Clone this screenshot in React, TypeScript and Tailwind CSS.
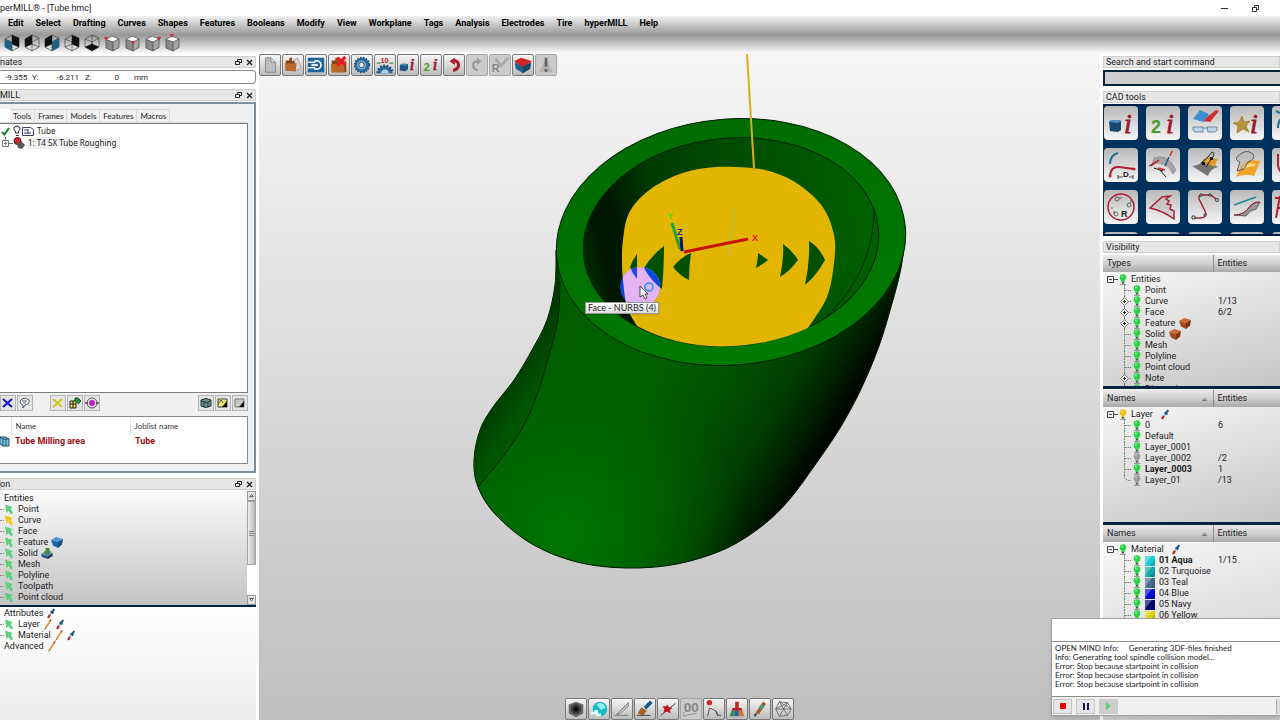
import React from 'react';
import clsx from 'clsx';

const MENU = [
	'Edit', 'Select', 'Drafting', 'Curves', 'Shapes', 'Features', 'Booleans', 'Modify',
	'View', 'Workplane', 'Tags', 'Analysis', 'Electrodes', 'Tire', 'hyperMILL', 'Help',
];

type RowData = {
	name: string;
	count?: string;
	bulb?: string;
	expand?: boolean;
	bold?: boolean;
	extra?: React.ReactNode;
	swatch?: string;
};

/* ---------- small icons ---------- */

const Bulb = ({ color = '#2fd04a' }: { color?: string }) => (
	<svg width="10" height="11" viewBox="0 0 10 11" className="shrink-0">
		<circle cx="5" cy="3.6" r="3.3" fill={color} />
		<circle cx="4" cy="2.6" r="1" fill="#fff" opacity=".5" />
		<path d="M3.4 6h3.2v2H3.4z" fill={color} />
		<path d="M3.8 8h2.4v1.6H3.8z" fill="#4a5a4a" />
		<path d="M2 10.4h6" stroke="#555" strokeWidth=".6" />
	</svg>
);

const Pick = ({ color = '#5fd07a' }: { color?: string }) => (
	<svg width="10" height="11" viewBox="0 0 10 11" className="shrink-0">
		<path d="M1 .5 8.500 3 6.800 5 9 9 7 10.500 4.600 7 2.600 9z" fill={color} />
	</svg>
);

const Dropper = () => (
	<svg width="10" height="11" viewBox="0 0 10 11" className="shrink-0">
		<path d="M2 10 4 6.600" stroke="#b52a1c" strokeWidth="2.200" />
		<path d="M3.800 7 6 4" stroke="#9fb8cc" strokeWidth="2" />
		<path d="M4.600 3.400 7.400 5.400M6 4.400 8.200 1" stroke="#1d5488" strokeWidth="2" />
	</svg>
);

const Pencil = () => (
	<svg width="10" height="11" viewBox="0 0 10 11" className="shrink-0">
		<path d="M2.600 9 7.400 1.600" stroke="#e8973c" strokeWidth="1.800" />
		<path d="M1.600 10.600 2.800 8.800" stroke="#54422c" strokeWidth="1" />
		<path d="m7 2.200 1-1.600" stroke="#c25a3a" strokeWidth="1.800" />
	</svg>
);

const Block = ({ top, left, right }: { top: string; left: string; right: string }) => (
	<svg width="12" height="11" viewBox="0 0 12 11" className="shrink-0">
		<path d="M0 3 5 0l7 2-5 3z" fill={top} />
		<path d="m0 3 7 2v6L2 8.400z" fill={left} />
		<path d="m7 5 5-3-1 5.600L7 11z" fill={right} />
	</svg>
);

const SolidBlock = () => (
	<svg width="12" height="11" viewBox="0 0 12 11" className="shrink-0">
		<path d="M0 6 4 3.600 11.600 5 7 8z" fill="#5d8fb4" />
		<path d="m0 6 7 2v3L1 9z" fill="#23567f" />
		<path d="m7 8 4.600-3v3L7 11z" fill="#173b58" />
		<path d="M4.500 0h4v3.500h2L6.500 7 2.800 3.500h1.700z" fill="#3d8a32" />
	</svg>
);

const DockButtons = () => (
	<span className="flex items-center gap-1">
		<button type="button" aria-label="Float">
			<svg width="7" height="7" viewBox="0 0 7 7" fill="none" stroke="#222">
				<path d="M2.500 2V.5h4v3H5M.5 2.500h4v3h-4z" />
			</svg>
		</button>
		<button type="button" aria-label="Close">
			<svg width="7" height="7" viewBox="0 0 7 7" stroke="#222" strokeWidth="1.300">
				<path d="m1 1 5 5M6 1 1 6" />
			</svg>
		</button>
	</span>
);

const PanelTitle = ({ children, dock }: { children: React.ReactNode; dock?: boolean }) => (
	<div className="flex h-3 shrink-0 items-center justify-between border border-[#cfcfcf] bg-[#e6e6e6] pr-0.5">
		<h2 className={clsx('leading-[10px]', dock ? '-ml-px' : 'ml-0.5')}>{children}</h2>
		{dock && <DockButtons />}
	</div>
);

/* ---------- view cube row ---------- */

const WIRE_FACES = [
	[['M8 1 15 4v9L8 10z', '#111'], ['M1 5 8 8v9L1 13z', '#1f5f88']],
	[['M1 5 8 1v9L1 13z', '#111']],
	[['M1 5 8 1v9L1 13z', '#111'], ['m8 8 7-4v9l-7 4z', '#1f5f88']],
	[['M8 1 15 4v9L8 10z', '#111']],
	[['m1 13 7-3 7 3-7 4z', '#111']],
];

const WireCube = ({ faces }: { faces: string[][] }) => (
	<svg width="17" height="18" viewBox="0 0 17 18" fill="none">
		<path
			d="M8 1 15 4v9l-7 4-7-4V5zM1 5l7 3 7-4M8 8v9M8 1v9l-7 3M8 10l7 3"
			stroke="#444"
			strokeWidth=".7"
		/>
		{faces.map(([d, fill]) => (
			<path key={d} d={d} fill={fill} />
		))}
	</svg>
);

const CORNERS = [[2, 5], [9, 9], [15, 5], [8, 2]];

const SolidCube = ({ at }: { at: number[] }) => (
	<svg width="17" height="18" viewBox="0 0 17 18">
		<path d="M8 2 15 5 9 8 2 5.500z" fill="#fff" />
		<path d="M2 5.500 9 8v9l-7-3z" fill="#8a8a8a" />
		<path d="m9 8 6-3v8.500L9 17z" fill="#a6a6a6" />
		<path d="M8 2 15 5v8.500L9 17l-7-3V5.500zM2 5.500 9 8l6-3M9 8v9" fill="none" stroke="#444" strokeWidth=".7" />
		<path d={`M${at[0] - 2} ${at[1] - 2}h4l-2 4z`} fill="#d2243a" />
	</svg>
);

/* ---------- command icons, drawn on a 22px board ---------- */

const InfoLetter = ({ x = 12, y = 17, size = 18 }: { x?: number; y?: number; size?: number }) => (
	<text
		x={x}
		y={y}
		fontSize={size}
		fontFamily="Liberation Serif"
		fontStyle="italic"
		fill="#9c1a2e"
		stroke="#9c1a2e"
		strokeWidth=".8"
	>
		i
	</text>
);

const Gear = () => (
	<>
		<circle cx="11" cy="11" r="8" fill="#2c6ea3" stroke="#1f4f7a" strokeWidth="2" strokeDasharray="1.800 1.400" />
		<circle cx="10.500" cy="11" r="5" fill="#7fa8c8" />
		<circle cx="10.500" cy="11" r="3" fill="#e4e4e4" stroke="#1f4f7a" />
	</>
);

const Folder = () => (
	<>
		<path d="m7 9 9-6 4 12-8 3z" fill="#d4d4d4" stroke="#888" strokeWidth=".6" />
		<path d="M3 6h4V3h3v4h3v11l-10-1z" fill="#8a4513" />
		<path d="M2 9h13l-1 9-11-1z" fill="#b8692a" />
	</>
);

const topTools: { label: string; off?: boolean; art: React.ReactNode }[] = [
	{ label: 'New', art: <path d="M6 3h6l5 5v11H6zM12 3v5h5" fill="#bdbdbd" stroke="#777" strokeWidth=".8" /> },
	{ label: 'Open', art: <Folder /> },
	{
		label: 'Import',
		art: (
			<>
				<path d="M2 3h18v16H2z" fill="#1f6296" />
				<path d="M2 8h8M2 14h8" stroke="#e5eef5" strokeWidth="1.500" />
				<path d="M9 6.500h3a4.500 4.500 0 0 1 0 9H9" fill="none" stroke="#e5eef5" strokeWidth="2" />
				<path d="M6 11h7" stroke="#e5eef5" strokeWidth="2.500" />
			</>
		),
	},
	{
		label: 'Close file',
		art: (
			<>
				<path d="M3 6h4V3h3v4h9v12H3z" fill="#8a4513" />
				<path d="M2 10h15v9H3z" fill="#b8692a" />
				<path d="m9 3 9 8M18 2 9 12" stroke="#ee1c1c" strokeWidth="3.500" />
			</>
		),
	},
	{ label: 'Options', art: <Gear /> },
	{
		label: 'Settings',
		art: (
			<>
				<path d="M3 20a8 8 0 0 1 16 0" fill="#2c6ea3" stroke="#1f4f7a" strokeWidth="3" strokeDasharray="2 1.500" />
				<path d="M7 20a4 4 0 0 1 8 0" fill="#b9cedf" />
				<path d="M2 9h4M16 9h4" stroke="#4a9440" strokeWidth="1.500" />
				<text x="6" y="9" fontSize="8" fontWeight="700" fill="#b02020" fontFamily="Liberation Sans">10</text>
			</>
		),
	},
	{
		label: 'Entity info',
		art: (
			<>
				<path d="m2 11 3-1.500 6 .5v6l-3 2-6-1z" fill="#1e5686" />
				<path d="m2 11 3-1.500 6 .5-3 2z" fill="#4b86b4" />
				<InfoLetter x={13} />
			</>
		),
	},
	{
		label: 'Two entity info',
		art: (
			<>
				<text x="3" y="18" fontSize="12" fontWeight="700" fill="#4a9a2c" fontFamily="Liberation Sans">2</text>
				<InfoLetter x={13} />
			</>
		),
	},
	{
		label: 'Undo',
		art: (
			<>
				<path d="M10 6c8 0 8 9 0 11" fill="none" stroke="#a81c2c" strokeWidth="3.500" />
				<path d="M6 7 12 3v8z" fill="#a81c2c" />
			</>
		),
	},
	{
		label: 'Redo',
		off: true,
		art: (
			<>
				<path d="M12 7c-7 0-7 8 0 10" fill="none" stroke="#9a9a9a" strokeWidth="2.500" />
				<path d="m16 7-5-4v8z" fill="#9a9a9a" />
			</>
		),
	},
	{
		label: 'Repeat',
		off: true,
		art: (
			<>
				<path d="m6 4 6 8 8-9" fill="none" stroke="#a9a9a9" strokeWidth="3" />
				<text x="2" y="19" fontSize="12" fontWeight="700" fill="#858585" fontFamily="Liberation Sans">R</text>
			</>
		),
	},
	{
		label: 'Solid',
		art: (
			<>
				<path d="m2 8 9 4v8l-8-5z" fill="#1f5f8e" />
				<path d="m11 12 9-4-1 7-8 5z" fill="#174563" />
				<path d="m1 7 8-4 12 4-10 6z" fill="#cf2424" />
			</>
		),
	},
	{
		label: 'Warning',
		off: true,
		art: (
			<>
				<path d="m11 3 8 16H3z" fill="#b4b4b4" />
				<path d="M11 3v10" stroke="#666" strokeWidth="3" />
				<circle cx="11" cy="17" r="1.800" fill="#666" />
			</>
		),
	},
];

const bottomTools: { label: string; off?: boolean; art: React.ReactNode }[] = [
	{
		label: 'Shaded cube',
		art: (
			<>
				<path d="m3 6 8-3 8 3v10l-8 4-8-4z" fill="#6a6a6a" />
				<circle cx="11" cy="11" r="6" fill="#2c2c2c" opacity=".7" />
				<circle cx="11" cy="11" r="3" fill="#111" />
			</>
		),
	},
	{
		label: 'Sphere',
		art: (
			<>
				<circle cx="12" cy="11" r="8" fill="#19b8c4" />
				<path d="M8 6c5-4 10 0 10 4l-5 2z" fill="#8ff0f2" />
				<path d="M2 14h4v-2h4v4h3v3H8v-2H2z" fill="#e8ffff" />
			</>
		),
	},
	{ label: 'Plane', art: <path d="M2 18h16M5 17 18 4v4L9 16z" fill="#c9c9c9" stroke="#777" /> },
	{
		label: 'Brush',
		art: (
			<>
				<path d="m11 10 7-7" stroke="#1c5a8c" strokeWidth="4" />
				<path d="m3 16 4-7 6 4-4 5z" fill="#a3622c" />
				<path d="M2 18h15" stroke="#333" />
			</>
		),
	},
	{
		label: 'Snap',
		art: (
			<>
				<path d="m3 18 16-13" stroke="#333" />
				<path d="m10 6 2 3 4 1-3 2 1 4-4-2-4 1 1-4-2-3h4z" fill="#b81f2a" />
			</>
		),
	},
	{
		label: 'Zero',
		off: true,
		art: (
			<>
				<path d="M3 19q8-3 14-3M3 14v5" fill="none" stroke="#8d8d8d" />
				<text x="3" y="14" fontSize="15" fontWeight="700" fill="#858585" fontFamily="Liberation Sans">
					00
				</text>
			</>
		),
	},
	{
		label: 'Point',
		art: (
			<>
				<path d="M4 19 6 10l7 3 3 5M13 13l2 6M16 18h3" fill="none" stroke="#444" />
				<circle cx="6" cy="4" r="3" fill="#d42626" />
			</>
		),
	},
	{
		label: 'Colors',
		art: (
			<>
				<path d="M9 3h4v8H9z" fill="#c02a2a" />
				<path d="M6 10h10l1 3H5z" fill="#b32323" />
				<path d="M5 13h4l-1 6H3z" fill="#2b8f4e" />
				<path d="M9 13h4v6H8z" fill="#2a63b5" />
				<path d="M13 13h4l2 6h-6z" fill="#cf7c26" />
			</>
		),
	},
	{
		label: 'Marker',
		art: (
			<>
				<path d="M8 16 16 4" stroke="#a4562c" strokeWidth="4" />
				<path d="m11 11 3-4" stroke="#3f9c74" strokeWidth="4" />
				<path d="m5 19 2-3" stroke="#333" strokeWidth="2" />
			</>
		),
	},
	{
		label: 'Mesh',
		art: (
			<path
				d="m7 3 9 1 4 7-4 7-9 1-4-8zM3 11h17M7 3l9 15M16 4 7 19M7 3l13 8M3 11l13-7"
				fill="none"
				stroke="#555"
				strokeWidth=".8"
			/>
		),
	},
];

const ToolButton = ({ label, off, art }: { label: string; off?: boolean; art: React.ReactNode }) => (
	<button
		type="button"
		aria-label={label}
		className={clsx(
			'size-[22px] rounded-xs border',
			off ? 'border-[#a5a5a5] bg-[#cbcbcb]' : 'border-[#777] bg-linear-to-b from-[#f6f6f6] to-[#bcbcbc]',
		)}
	>
		<svg viewBox="0 0 22 22" className="size-5">{art}</svg>
	</button>
);

/* ---------- CAD tool tiles, drawn on a 34px board ---------- */

const tiles: { label: string; art: React.ReactNode }[] = [
	{
		label: 'Entity info',
		art: (
			<>
				<path d="m5 16 2-2h8l2 1v9l-3 2-8-1z" fill="#17466f" />
				<path d="m5 16 2-2h8l2 1-3 2z" fill="#4d8cbd" />
				<InfoLetter x={20} y={27} size={28} />
			</>
		),
	},
	{
		label: 'Two entity info',
		art: (
			<>
				<text x="5" y="27" fontSize="18" fontWeight="700" fill="#4a9a2c" fontFamily="Liberation Sans">2</text>
				<InfoLetter x={20} y={27} size={28} />
			</>
		),
	},
	{
		label: 'Check view',
		art: (
			<>
				<path d="m5 13 7-9 9 4-5 8z" fill="#3a8fd0" />
				<path d="m16 15 3-4 9-7 3 1-9 11z" fill="#d22a35" />
				<path d="M5 21h10v5H7q-3-1-2-5zM19 21h10q1 4-2 5h-7zM15 22h4" fill="#b9d6e8" stroke="#6d8a9c" />
			</>
		),
	},
	{
		label: 'Star info',
		art: (
			<>
				<path d="m12 10 2 6 6-1-4 5 3 6-6-3-6 4 1-7-5-3 6-1z" fill="#b5943b" stroke="#8b6e22" strokeWidth=".6" />
				<InfoLetter x={20} y={27} size={28} />
			</>
		),
	},
	{ label: 'Arc', art: <path d="M6 22q0-10 8-12M4 5l4 2" fill="none" stroke="#1f6f96" strokeWidth="2" /> },
	{
		label: 'Dimension curve',
		art: (
			<>
				<path d="M6 16q0-9 8-11" fill="none" stroke="#1f6f96" strokeWidth="2" />
				<path d="M6 28q1-10 9-9l15 2" fill="none" stroke="#b01e38" strokeWidth="2" />
				<path d="M14 29h5M25 29h4M14 27v4M29 27v4" stroke="#222" strokeWidth=".8" />
				<text x="19" y="29" fontSize="8" fontWeight="700" fill="#111" fontFamily="Liberation Sans">D</text>
				<circle cx="6" cy="28" r="1.500" fill="#b01e38" />
				<circle cx="30" cy="21" r="1.500" fill="#b01e38" />
			</>
		),
	},
	{
		label: 'Curve direction',
		art: (
			<>
				<path d="M8 10q14-5 22 12l-3 4Q20 12 6 16z" fill="#a6a6a6" stroke="#777" strokeWidth=".5" />
				<path d="m3 18 10-6M8 20l9 3M14 22l6 7" stroke="#222" />
				<path d="m5 18 8-6M24 8l2-5M12 20l7 2" stroke="#d4232d" strokeWidth="1.500" />
				<path d="m19 18 4-9" stroke="#1b5c8c" strokeWidth="1.500" />
			</>
		),
	},
	{
		label: 'Patch surface',
		art: (
			<>
				<path d="M4 18q8 0 12-7l14 8q-8 2-10 9z" fill="#747474" />
				<path d="m13 15 7-6 10 2-4 8q-6-4-13-4z" fill="#e59a26" />
				<path d="m13 15 7-6 4-5q4 1 0 6l-6 9" fill="none" stroke="#222" />
				<path d="M14 14h3v3h-3zM22 9h3v3h-3z" fill="#111" />
			</>
		),
	},
	{
		label: 'Unroll surface',
		art: (
			<>
				<path d="M11 18q6-8 19-5l-6 15q-9-3-18 1z" fill="#f0a326" />
				<path d="M13 20q7-4 12-3" stroke="#fbd68c" strokeWidth="3" fill="none" />
				<path d="M8 8q8-8 15-2 3 5-5 8l-4 7-7 2 3-9q-6-2-2-6z" fill="#b0b0b0" fillOpacity=".4" stroke="#444" strokeWidth=".8" />
			</>
		),
	},
	{
		label: 'Shield',
		art: (
			<>
				<path d="M6 6v12q2 8 9 10" fill="none" stroke="#a92236" strokeWidth="2" />
				<path d="M9 6v10q2 6 6 8" fill="none" stroke="#3d8fb8" strokeWidth="2" />
			</>
		),
	},
	{
		label: 'Radius',
		art: (
			<>
				<circle cx="17" cy="17" r="13" fill="none" stroke="#b01e38" strokeWidth="1.500" />
				<g fill="none" stroke="#444" strokeWidth=".8">
					<circle cx="13" cy="9" r="2" />
					<circle cx="25" cy="15" r="2" />
					<circle cx="12" cy="24" r="2" />
					<path d="M15 8h3M27 10v3M10 21v3M8 17v2" />
				</g>
				<text x="17" y="27" fontSize="9" fontWeight="700" fill="#222" fontFamily="Liberation Sans">R</text>
			</>
		),
	},
	{
		label: 'Profile',
		art: (
			<path
				d="m4 18 12-11 8-1-4 3 3 2-2 3 4 1-1 4 4 2v8q-11-8-24-11z"
				fill="#bbb"
				fillOpacity=".5"
				stroke="#a91f34"
				strokeWidth="1.500"
			/>
		),
	},
	{
		label: 'Spline',
		art: (
			<>
				<path d="M5 28h8q7-1 4-7L11 9q-1-4 4-4h8l6 5" fill="none" stroke="#a91f34" strokeWidth="1.500" />
				<g fill="#ddd" stroke="#222" strokeWidth=".8">
					<path d="M4 26h3v3H4zM12 4h2v2h-2zM21 4h2v2h-2zM16 24h2v2h-2z" />
					<circle cx="29" cy="10" r="1.500" />
				</g>
			</>
		),
	},
	{
		label: 'Sweep',
		art: (
			<>
				<path d="m4 15 22-8" stroke="#1c8a9a" strokeWidth="1.500" />
				<path d="M4 25q11 0 16-9 5-5 10-4l-4 7q-6 1-10 7z" fill="#999" stroke="#333" strokeWidth=".7" />
				<path d="M4 25q11 0 16-9 5-5 10-4" fill="none" stroke="#a91f34" />
			</>
		),
	},
	{ label: 'Loft', art: <path d="M4 28 8 6M3 8h10M6 18h8" stroke="#a91f34" strokeWidth="2" /> },
	...['Extrude', 'Fillet', 'Trim', 'Split', 'Join'].map((label) => ({
		label,
		art: <path d="m14 5 5-3 4 3" fill="none" stroke="#777" />,
	})),
];

/* ---------- tree tables on the right ---------- */

const Branch = ({ expand, last }: { expand?: boolean; last?: boolean }) => (
	<svg width="12" height="11" viewBox="0 0 12 11" fill="none" stroke="#777" className="shrink-0">
		<path d={last ? 'M4.500 0v3l3 2.500H11' : 'M4.500 0v11M5 5.500h6'} strokeDasharray="1.500 1" />
		{expand && (
			<>
				<path d="m4.500 1.500 4 4-4 4-4-4z" fill="#f2f2f2" />
				<path d="M3 5.500h3M4.500 4v3" stroke="#222" />
			</>
		)}
	</svg>
);

const TreeTable = ({
	head, root, rows, sort, rootBulb, tool, open, className,
}: {
	head: string;
	root: string;
	rows: RowData[];
	sort?: boolean;
	rootBulb?: string;
	tool?: boolean;
	open?: boolean;
	className?: string;
}) => (
	<section className={clsx('overflow-hidden bg-linear-165 from-[#fbfbfb] to-[#c6c6c6]', className)}>
		<table className="w-full table-fixed text-left">
			<thead>
				<tr className="h-[17px] bg-linear-to-b from-[#e9e9e9] via-[#cfcfcf] to-[#a9a9a9]">
					<th className="w-[110px] border-r border-[#8e8e8e] p-0 pl-1 font-normal">
						<span className="flex items-center justify-between pr-1.5">
							{head}
							{sort && (
								<svg width="5" height="4" viewBox="0 0 5 4">
									<path d="M.5 3.500 2.500 1l2 2.500z" fill="none" stroke="#555" strokeWidth=".7" />
								</svg>
							)}
						</span>
					</th>
					<th className="p-0 pl-1 font-normal">Entities</th>
				</tr>
			</thead>
			<tbody>
				<tr className="h-0.5"><td colSpan={2} className="p-0" /></tr>
				<tr>
					<td className="p-0 pl-1">
						<span className="flex h-[11px] items-center">
							<svg width="11" height="11" viewBox="0 0 11 11" fill="none" stroke="#444" className="shrink-0">
								<path d="M.5 2.500h6v6h-6zM2 5.500h3M7 5.500h4" />
							</svg>
							<Bulb color={rootBulb} />
							<span className="mx-[3px]">{root}</span>
							{tool && <span className="ml-1"><Dropper /></span>}
						</span>
					</td>
					<td className="p-0" />
				</tr>
				{rows.map((row, i) => (
					<tr key={row.name}>
						<td className="p-0 pl-[17px]">
							<span className="flex h-[11px] items-center whitespace-nowrap">
								<Branch expand={row.expand} last={!open && i === rows.length - 1} />
								<Bulb color={row.bulb} />
								{row.swatch && (
									<svg width="10" height="10" viewBox="0 0 10 10" className="ml-[3px] shrink-0">
										<path d="M0 0h10v10H0z" fill={row.swatch} />
										<path d="M0 0h7L2 6 0 10z" fill="#fff" opacity=".3" />
										<path d="M10 3v7H4z" fill="#000" opacity=".15" />
									</svg>
								)}
								<span className={clsx(row.swatch ? 'ml-1' : 'ml-[3px]', row.bold && 'font-bold')}>{row.name}</span>
								{row.extra && <span className="ml-1">{row.extra}</span>}
							</span>
						</td>
						<td className="p-0 pl-[5px] leading-[11px]">{row.count}</td>
					</tr>
				))}
			</tbody>
		</table>
	</section>
);

const orange = <Block top="#cc6a35" left="#a8481c" right="#7c3010" />;

const typeRows: RowData[] = [
	{ name: 'Point' },
	{ name: 'Curve', count: '1/13', expand: true },
	{ name: 'Face', count: '6/2', expand: true },
	{ name: 'Feature', expand: true, extra: orange },
	{ name: 'Solid', extra: orange },
	{ name: 'Mesh' },
	{ name: 'Polyline' },
	{ name: 'Point cloud' },
	{ name: 'Note', expand: true },
	{ name: 'Dimension', expand: true },
];

const layerRows: RowData[] = [
	{ name: '0', count: '6' },
	{ name: 'Default' },
	{ name: 'Layer_0001' },
	{ name: 'Layer_0002', count: '/2', bulb: '#9a9a9a' },
	{ name: 'Layer_0003', count: '1', bold: true },
	{ name: 'Layer_01', count: '/13', bulb: '#9a9a9a' },
];

const materialRows: RowData[] = [
	{ name: '01 Aqua', count: '1/15', bold: true, swatch: '#16cfd6' },
	{ name: '02 Turquoise', swatch: '#12a8a8' },
	{ name: '03 Teal', swatch: '#4a6c94' },
	{ name: '04 Blue', swatch: '#0a0ad2' },
	{ name: '05 Navy', swatch: '#06066a' },
	{ name: '06 Yellow', swatch: '#dcd20c' },
];

/* ---------- left side ---------- */

const selectRows: { name: string; extra?: React.ReactNode }[] = [
	{ name: 'Point' },
	{ name: 'Curve' },
	{ name: 'Face' },
	{ name: 'Feature', extra: <Block top="#4a96d6" left="#1f64a6" right="#15487c" /> },
	{ name: 'Solid', extra: <SolidBlock /> },
	{ name: 'Mesh' },
	{ name: 'Polyline' },
	{ name: 'Toolpath' },
	{ name: 'Point cloud' },
];

const SelectRow = ({ name, extra }: { name: string; extra?: React.ReactNode }) => (
	<li className="flex h-[11px] items-center">
		<span className="w-1 border-t border-dotted border-[#888]" />
		<Pick color={name === 'Curve' ? '#f5c518' : undefined} />
		<span className="ml-1">{name}</span>
		{extra && <span className="ml-[3px] flex gap-0.5">{extra}</span>}
	</li>
);

const JobButton = ({ label, children }: { label: string; children: React.ReactNode }) => (
	<button type="button" aria-label={label} className="size-4 border border-[#b4b4b4] bg-[#e4e4e4]">
		<svg viewBox="0 0 14 14" className="size-3.5">{children}</svg>
	</button>
);

const JobPanel = () => (
	<section className="mt-px flex min-h-0 flex-1 flex-col border-2 border-l-0 border-[#7d8e9a] bg-[#f0f0f0] pt-[5px] pr-1.5 pb-[7px] font-[Lato,sans-serif] text-[8px]">
		<div className="flex h-3.5 border-b border-[#ddd] leading-3">
			<span className="w-2.5 bg-white" />
			{['Tools', 'Frames', 'Models', 'Features', 'Macros'].map((tab) => (
				<button key={tab} type="button" className="border-t border-r border-[#d9d9d9] px-[3px]">
					{tab}
				</button>
			))}
		</div>
		<ul className="min-h-0 flex-1 border border-l-0 border-[#7c7c7c] bg-white pt-px font-['Noto_Sans',sans-serif] leading-3">
			<li className="flex h-3 items-center">
				<svg width="36" height="12" viewBox="0 0 36 12" fill="none">
					<path d="m2 7 2.500 2.500L9 3" stroke="#12802a" strokeWidth="2" />
					<path d="M15.500 8V6.500q-4-4 1.500-5.500 5 1.500 1.500 5.500V8zM16 10.500h2.500" stroke="#222" />
					<path d="M22.500 2.500h8l3 2v6h-11zM24 5h4M24 8h7M28 4v5" stroke="#33426e" />
				</svg>
				<span className="ml-px">Tube</span>
			</li>
			<li className="flex h-3 items-center">
				<svg width="27" height="12" viewBox="0 0 27 12" fill="none">
					<path d="M2.500 3.500h6v6h-6zM4 6.500h3M5.500 5v3M9 6.500h4M5.500 0v3" stroke="#777" />
					<circle cx="17.500" cy="4" r="3.500" fill="#c62a32" stroke="#5c1218" />
					<path d="m17 7 4-3 4 4-3 4-4-1z" fill="#5b5553" />
				</svg>
				<span className="ml-px bg-[#f1f1f1] pr-1">1: T4 5X Tube Roughing</span>
			</li>
		</ul>
		<div className="mt-0.5 flex h-4 shrink-0 justify-between">
			<div className="flex gap-px">
				<JobButton label="Delete"><path d="m2 3 9 8M11 3 2 11" stroke="#1414c4" strokeWidth="2" /></JobButton>
				<JobButton label="Comment">
					<path d="M2 5q4-5 9-1 1 4-4 5l-2 3V9Q2 8 2 5zM4 5h5M5 7h3" fill="#fff" stroke="#345" strokeWidth=".9" />
				</JobButton>
				<span className="w-[15px]" />
				<JobButton label="Calculate"><path d="m2 3 9 8M11 3 2 11" stroke="#cfc51c" strokeWidth="2" /></JobButton>
				<JobButton label="Simulate">
					<path d="M2 5h6v7H2z" fill="#e8e23a" stroke="#222" />
					<path d="M2 8h6M5 5v7" stroke="#222" />
					<path d="M7 5V2h3l3 3-3 3" fill="#27903a" stroke="#154a20" />
				</JobButton>
				<JobButton label="Target">
					<circle cx="7" cy="7" r="5" fill="none" stroke="#555" />
					<circle cx="7" cy="7" r="3" fill="#c020c0" />
					<path d="M0 7h3M11 7h3" stroke="#222" />
				</JobButton>
			</div>
			<div className="flex gap-px">
				<JobButton label="Stock">
					<path d="M2 4v6q5 3 10 0V4Q7 1 2 4z" fill="#6f9090" stroke="#233" />
					<path d="M2 5q5 3 10 0M5 6v5M9 6v5" stroke="#233" fill="none" />
				</JobButton>
				<JobButton label="Show all">
					<path d="M2 3h9v8H2z" fill="#eee66a" stroke="#444" />
					<path d="m2 8 3-4 2 3" fill="none" stroke="#444" />
					<path d="M6 11 11 5v6z" fill="#111" />
				</JobButton>
				<JobButton label="Show one">
					<path d="M2 3h9v8H2z" fill="#c9c9c9" stroke="#777" />
					<path d="M6 11 11 5v6z" fill="#111" />
				</JobButton>
			</div>
		</div>
		<div className="mt-[5px] h-12 shrink-0 border border-l-0 border-[#8a8a8a] bg-white">
			<table className="w-full table-fixed text-left">
				<thead>
					<tr className="h-[18px] text-[#333]">
						<th className="w-[11px] border-r border-[#e2e2e2] p-0" aria-label="Type" />
						<th className="w-[119px] border-r border-[#e2e2e2] p-0 pl-1 font-normal">Name</th>
						<th className="p-0 pl-1 font-normal">Joblist name</th>
					</tr>
				</thead>
				<tbody>
					<tr className="h-3 font-[Roboto,sans-serif] text-[9px] font-bold text-[#9a0d12]">
						<td className="p-0">
							<svg width="10" height="12" viewBox="0 0 10 12">
								<path d="M0 2h5l4 2v7H3L0 9z" fill="#7cc8dc" stroke="#234a66" />
								<path d="M3 4v7M6 4v7M0 2l3 2h6" stroke="#234a66" fill="none" />
							</svg>
						</td>
						<td className="p-0 pl-1">Tube Milling area</td>
						<td className="p-0 pl-[5px]">Tube</td>
					</tr>
				</tbody>
			</table>
		</div>
	</section>
);

const ScrollArrow = ({ d }: { d: string }) => (
	<svg width="9" height="10" viewBox="0 0 9 10" className="shrink-0 border border-[#999] bg-[#e2e2e2]">
		<path d={d} fill="none" stroke="#444" />
	</svg>
);

const LeftColumn = () => (
	<aside className="flex min-h-0 w-64 shrink-0 flex-col pt-0.5">
		<PanelTitle dock>nates</PanelTitle>
		<div className="mt-0.5 flex h-3.5 shrink-0 items-center rounded-sm rounded-l-none border border-l-0 border-[#8a8a8a] bg-white pl-[5px] text-[8px]">
			<span className="w-[27px]">-9.355</span>
			<span className="w-2.5">Y:</span>
			<span className="w-[37px] text-right">-6.211</span>
			<span className="ml-1.5 w-2.5">Z:</span>
			<span className="w-6 text-right">0</span>
			<span className="ml-[15px]">mm</span>
		</div>
		<div className="mt-[5px]"><PanelTitle dock>MILL</PanelTitle></div>
		<JobPanel />
		<div className="mt-[5px]"><PanelTitle dock>on</PanelTitle></div>
		<section className="mt-px flex shrink-0 justify-between border-b-2 border-[#0a2340] bg-linear-to-b from-[#fafafa] to-[#c4c4c4]">
			<ul className="py-0.5">
				<li className="h-[11px] pl-1 leading-[11px]">Entities</li>
				{selectRows.map((row) => (
					<SelectRow key={row.name} {...row} />
				))}
			</ul>
			<div className="flex w-[9px] flex-col bg-white">
				<ScrollArrow d="m2 6 2.500-3L7 6z" />
				<span className="flex h-16 flex-col justify-center gap-px border border-[#a5a5a5] bg-linear-to-r from-[#eee] to-[#b5b5b5] px-px">
					<span className="h-px bg-[#8a8a8a]" />
					<span className="h-px bg-[#8a8a8a]" />
					<span className="h-px bg-[#8a8a8a]" />
				</span>
				<span className="flex-1" />
				<ScrollArrow d="m2 3 2.500 3L7 3z" />
			</div>
		</section>
		<section className="h-[113px] shrink-0 bg-linear-to-b from-white to-[#ededed] pt-px">
			<ul>
				<li className="flex h-[11px] items-center pl-1">Attributes<span className="ml-[3px]"><Dropper /></span></li>
				<SelectRow name="Layer" extra={<><Pencil /><Dropper /></>} />
				<SelectRow name="Material" extra={<><Pencil /><Dropper /></>} />
				<li className="flex h-[11px] items-center pl-1">Advanced<span className="ml-[3px]"><Pencil /></span></li>
			</ul>
		</section>
	</aside>
);

/* ---------- model view ---------- */

// Catmull-Rom through the points, written as cubic segments
const spline = (pts: number[][]) =>
	pts
		.slice(1)
		.map((p, i) => {
			const a = pts[i];
			const before = pts[i - 1] ?? a;
			const after = pts[i + 2] ?? p;
			const c1 = [a[0] + (p[0] - before[0]) / 6, a[1] + (p[1] - before[1]) / 6];
			const c2 = [p[0] - (after[0] - a[0]) / 6, p[1] - (after[1] - a[1]) / 6];
			return `C${c1} ${c2} ${p}`;
		})
		.join('');

const RIM_INNER = { cx: 731, cy: 242, rx: 148, ry: 104 };

const LEFT_EDGE = [
	[556, 250], [555, 285], [547, 320], [532, 350], [514, 380], [493, 407],
	[480, 430], [474, 460], [478, 487],
];

const BODY = `M556 250${spline([
	...LEFT_EDGE,
	[496, 515], [532, 544], [577, 562], [627, 568], [677, 564], [725, 549], [762, 526],
	[789, 500], [815, 465], [840, 428], [861, 389], [879, 346], [893, 300], [901, 268], [905, 238],
])}L731 242Z`;

const SEAM = [[560, 282], [558, 318], [550, 352], [532, 408], [510, 447], [478, 487]];

const SLIVER = `M556 250${spline(LEFT_EDGE)}${spline([...SEAM].reverse())}Z`;

const CORE = `M637 326${spline([
	[637, 326], [627, 307], [623, 280], [622, 261], [623, 240], [629, 213], [648, 191], [677, 175],
	[706, 168], [735, 167], [765, 170], [795, 182], [822, 206], [834, 235], [834, 263], [827, 297], [808, 328],
])}A148 104 -5 0 1 637 326Z`;

const GOUGES = [
	'M758 253Q764 257 768 260 762 265 756 268 758 260 758 253Z',
	'M783 244Q792 250 798 260 790 271 780 277 784 260 783 244Z',
	'M809 241Q819 247 825 260 816 276 805 285 810 262 809 241Z',
	'M691 253Q681 257 673 267 680 276 689 280Q689 265 691 253Z',
	'M664 246Q652 255 644 268 651 281 662 289 664 268 664 246Z',
	'M637 254Q632 261 630 267 632 273 637 279Z',
];

const Model = () => (
	<svg viewBox="259 54 841 666" preserveAspectRatio="xMidYMid slice" className="size-full" role="img" aria-label="Tube model">
		<defs>
			<linearGradient id="body" gradientUnits="userSpaceOnUse" x1="559" y1="331" x2="804" y2="477">
				<stop offset="0" stopColor="#005e00" />
				<stop offset=".35" stopColor="#006000" />
				<stop offset=".6" stopColor="#005200" />
				<stop offset=".78" stopColor="#003e00" />
				<stop offset=".9" stopColor="#002400" />
				<stop offset="1" stopColor="#000600" />
			</linearGradient>
			<radialGradient id="glow" gradientUnits="userSpaceOnUse" cx="565" cy="535" r="180">
				<stop offset="0" stopColor="#007600" />
				<stop offset=".4" stopColor="#006e00" stopOpacity=".7" />
				<stop offset="1" stopColor="#006000" stopOpacity="0" />
			</radialGradient>
			<linearGradient id="sliver" gradientUnits="userSpaceOnUse" x1="500" y1="385" x2="530" y2="405">
				<stop offset="0" stopColor="#003a00" />
				<stop offset="1" stopColor="#005600" />
			</linearGradient>
			<linearGradient id="rim" gradientUnits="userSpaceOnUse" x1="700" y1="120" x2="740" y2="366">
				<stop offset="0" stopColor="#006c00" />
				<stop offset="1" stopColor="#007a00" />
			</linearGradient>
			<linearGradient id="wall" gradientUnits="userSpaceOnUse" x1="583" y1="250" x2="879" y2="210">
				<stop offset="0" stopColor="#002c00" />
				<stop offset=".07" stopColor="#001600" />
				<stop offset=".13" stopColor="#001800" />
				<stop offset=".28" stopColor="#003c00" />
				<stop offset=".6" stopColor="#004e00" />
				<stop offset="1" stopColor="#006200" />
			</linearGradient>
			<clipPath id="spot"><circle cx="640" cy="287" r="20" /></clipPath>
			<clipPath id="hole"><ellipse {...RIM_INNER} transform="rotate(-5 731 242)" /></clipPath>
		</defs>
		<path d={BODY} fill="url(#body)" />
		<path d={BODY} fill="url(#glow)" stroke="#001800" />
		<path d={SLIVER} fill="url(#sliver)" />
		<path d={`M560 282${spline(SEAM)}`} fill="none" stroke="#001c00" />
		<ellipse cx="731" cy="242" rx="175" ry="123" transform="rotate(-5 731 242)" fill="url(#rim)" stroke="#002000" />
		<ellipse {...RIM_INNER} transform="rotate(-5 731 242)" fill="url(#wall)" stroke="#002000" />
		<path d="M874 213C872 262 852 296 810 332" clipPath="url(#hole)" fill="none" stroke="#002400" />
		<path d={CORE} fill="#e2b600" />
		{GOUGES.map((d) => (
			<path key={d} d={d} fill="#005000" />
		))}
		<path d="M747 54 754 168" stroke="#dcae1c" strokeWidth="2" />
		<path d="M733 209Q734 226 730 239 728 247 729 255" fill="none" stroke="#8cc87c" />
		<path d="M684 252 748 239" stroke="#c41208" strokeWidth="3" />
		<path d="M672 223 680 249" stroke="#22a818" strokeWidth="3" />
		<path d="M681 237 682 251" stroke="#10106c" strokeWidth="3" />
		<g fontFamily="Liberation Sans" fontSize="9" fontWeight="700">
			<text x="752" y="241" fill="#e01010">X</text>
			<text x="667" y="219" fill="#3ee01c">Y</text>
			<text x="677" y="235" fill="#1c1ca8">Z</text>
		</g>
		<g clipPath="url(#spot)">
			<circle cx="640" cy="287" r="20" fill="#0a46e4" />
			<path d={CORE} fill="#e4b4f4" />
			<path d={GOUGES[4]} fill="#0a46e4" />
			<path d={GOUGES[5]} fill="#2848d8" />
			<path d="M625 303h30v6h-30z" fill="#f4ea10" />
		</g>
		<circle cx="649" cy="287" r="4" fill="none" stroke="#4c9cea" strokeWidth="2" />
		<path d="M640 286v11l3-2 2 4 2-1-2-4h3z" fill="#fff" stroke="#222" strokeWidth=".8" />
	</svg>
);

const Viewport = () => (
	<main className="relative min-w-0 flex-1 overflow-hidden bg-linear-to-b from-[#f6f6f6] to-[#bfbfbf]">
		<Model />
		<div className="absolute top-0 left-0 flex gap-px">
			{topTools.map((tool) => (
				<ToolButton key={tool.label} {...tool} />
			))}
		</div>
		<div className="absolute inset-x-0 bottom-0 flex justify-center gap-px">
			{bottomTools.map((tool) => (
				<ToolButton key={tool.label} {...tool} />
			))}
		</div>
		<div role="tooltip" className="absolute top-[248px] left-[326px] border border-[#999] bg-linear-to-b from-white to-[#dcdcdc] px-0.5 font-[Lato,sans-serif] leading-[10px] whitespace-nowrap shadow-sm">
			Face - NURBS (4)
		</div>
	</main>
);

const RightColumn = () => (
	<aside className="flex min-h-0 w-[177px] shrink-0 flex-col pt-0.5">
		<PanelTitle><label htmlFor="command">Search and start command</label></PanelTitle>
		<input id="command" type="text" className="mt-0.5 -mr-1 h-4 shrink-0 border-2 border-[#0a2340] bg-[#cdcdcd] outline-none" />
		<div className="mt-[5px]"><PanelTitle>CAD tools</PanelTitle></div>
		<section className="mt-px h-[132px] shrink-0 overflow-hidden border-y-2 border-[#001c44] bg-[#00305c] pl-px">
			<div className="grid w-max grid-cols-5 gap-2">
				{tiles.map(({ label, art }) => (
					<button
						key={label}
						type="button"
						aria-label={label}
						className="size-[34px] rounded-sm bg-linear-to-b from-[#b9b9b9] to-[#f6f6f6]"
					>
						<svg viewBox="0 0 34 34" className="size-full">{art}</svg>
					</button>
				))}
			</div>
		</section>
		<div className="mt-[5px]"><PanelTitle>Visibility</PanelTitle></div>
		<TreeTable
			className="mt-0.5 h-[134px] shrink-0 border-b-[3px] border-[#0a2340]"
			head="Types"
			root="Entities"
			rows={typeRows}
			open
		/>
		<TreeTable
			className="h-[136px] shrink-0 border-b-[3px] border-[#0a2340] pt-px"
			head="Names"
			root="Layer"
			rootBulb="#f2c21a"
			rows={layerRows}
			sort
			tool
		/>
		<TreeTable className="flex-1" head="Names" root="Material" rows={materialRows} sort tool open />
	</aside>
);

const MessageWindow = () => (
	<section className="absolute right-0 bottom-1 flex w-[229px] flex-col border border-r-0 border-[#a0a0a0] bg-[#f0f0f0] font-[Lato,sans-serif] shadow-md">
		<div className="h-[22px] bg-white" />
		<div className="h-14 border-y border-[#8c8c8c] bg-white pt-0.5 pl-[3px] text-[8px] leading-[9px] text-[#222]">
			<p className="flex gap-2.5"><span>OPEN MIND Info:</span><span>Generating 3DF-files finished</span></p>
			<p>Info: Generating tool spindle collision model...</p>
			<p>Error: Stop because startpoint in collision</p>
			<p>Error: Stop because startpoint in collision</p>
			<p>Error: Stop because startpoint in collision</p>
		</div>
		<div className="flex h-[18px] items-center gap-1 pl-px">
			<button type="button" aria-label="Stop" className="flex h-[15px] w-[19px] items-center justify-center border border-[#c4c4c4] bg-[#e6e6e6]">
				<span className="size-1.5 bg-[#e00c0c]" />
			</button>
			<button type="button" aria-label="Pause" className="flex h-[15px] w-[19px] items-center justify-center gap-0.5 border border-[#c4c4c4] bg-[#e6e6e6]">
				<span className="h-[7px] w-0.5 bg-[#14146c]" />
				<span className="h-[7px] w-0.5 bg-[#14146c]" />
			</button>
			<button type="button" aria-label="Play" className="flex h-[15px] w-[19px] items-center justify-center bg-[#cdcdcd]">
				<svg width="5" height="8" viewBox="0 0 5 8"><path d="m0 0 5 4-5 4z" fill="#5fd070" /></svg>
			</button>
			<span className="ml-auto h-[15px] w-1 border-l border-[#b0b0b0] bg-[#dcdcdc]" />
		</div>
	</section>
);

const Header: React.FC = () => (
	<header className="shrink-0">
		<div className="flex h-4 items-center justify-between bg-white pr-[21px] text-[#222]">
			<h1>perMILL® - [Tube.hmc]</h1>
			<div className="flex gap-6">
				<button type="button" aria-label="Minimize">
					<svg width="7" height="7" viewBox="0 0 7 7"><path d="M0 3.500h7" stroke="#333" /></svg>
				</button>
				<button type="button" aria-label="Restore">
					<svg width="7" height="7" viewBox="0 0 7 7" fill="none" stroke="#333"><path d="M.5 2.500h4v4h-4zM2.500 2V.5h4v4H5" /></svg>
				</button>
			</div>
		</div>
		<div className="h-[38px] bg-linear-to-b from-[#f2f2f2] via-[#989898] via-50% to-white">
			<nav className="flex h-[15px] items-center gap-3 pl-2 font-bold text-black">
				{MENU.map((item) => (
					<a key={item} href="#">{item}</a>
				))}
			</nav>
			<div className="flex gap-[3px] pt-[3px] pl-1">
				{WIRE_FACES.map((faces, i) => (
					<button key={i} type="button" aria-label={`View ${i + 1}`}><WireCube faces={faces} /></button>
				))}
				{CORNERS.map((at, i) => (
					<button key={i} type="button" aria-label={`Corner ${i + 1}`}><SolidCube at={at} /></button>
				))}
			</div>
		</div>
	</header>
);

export const App: React.FC = () => {
	return (
		<div className="relative flex h-screen flex-col overflow-hidden bg-white font-[Roboto,sans-serif] text-[9px] leading-[11px] text-[#1c1c1c]">
			<Header />
			<div className="flex min-h-0 flex-1 gap-[3px]">
				<LeftColumn />
				<Viewport />
				<RightColumn />
			</div>
			<MessageWindow />
		</div>
	);
};

export default App;
